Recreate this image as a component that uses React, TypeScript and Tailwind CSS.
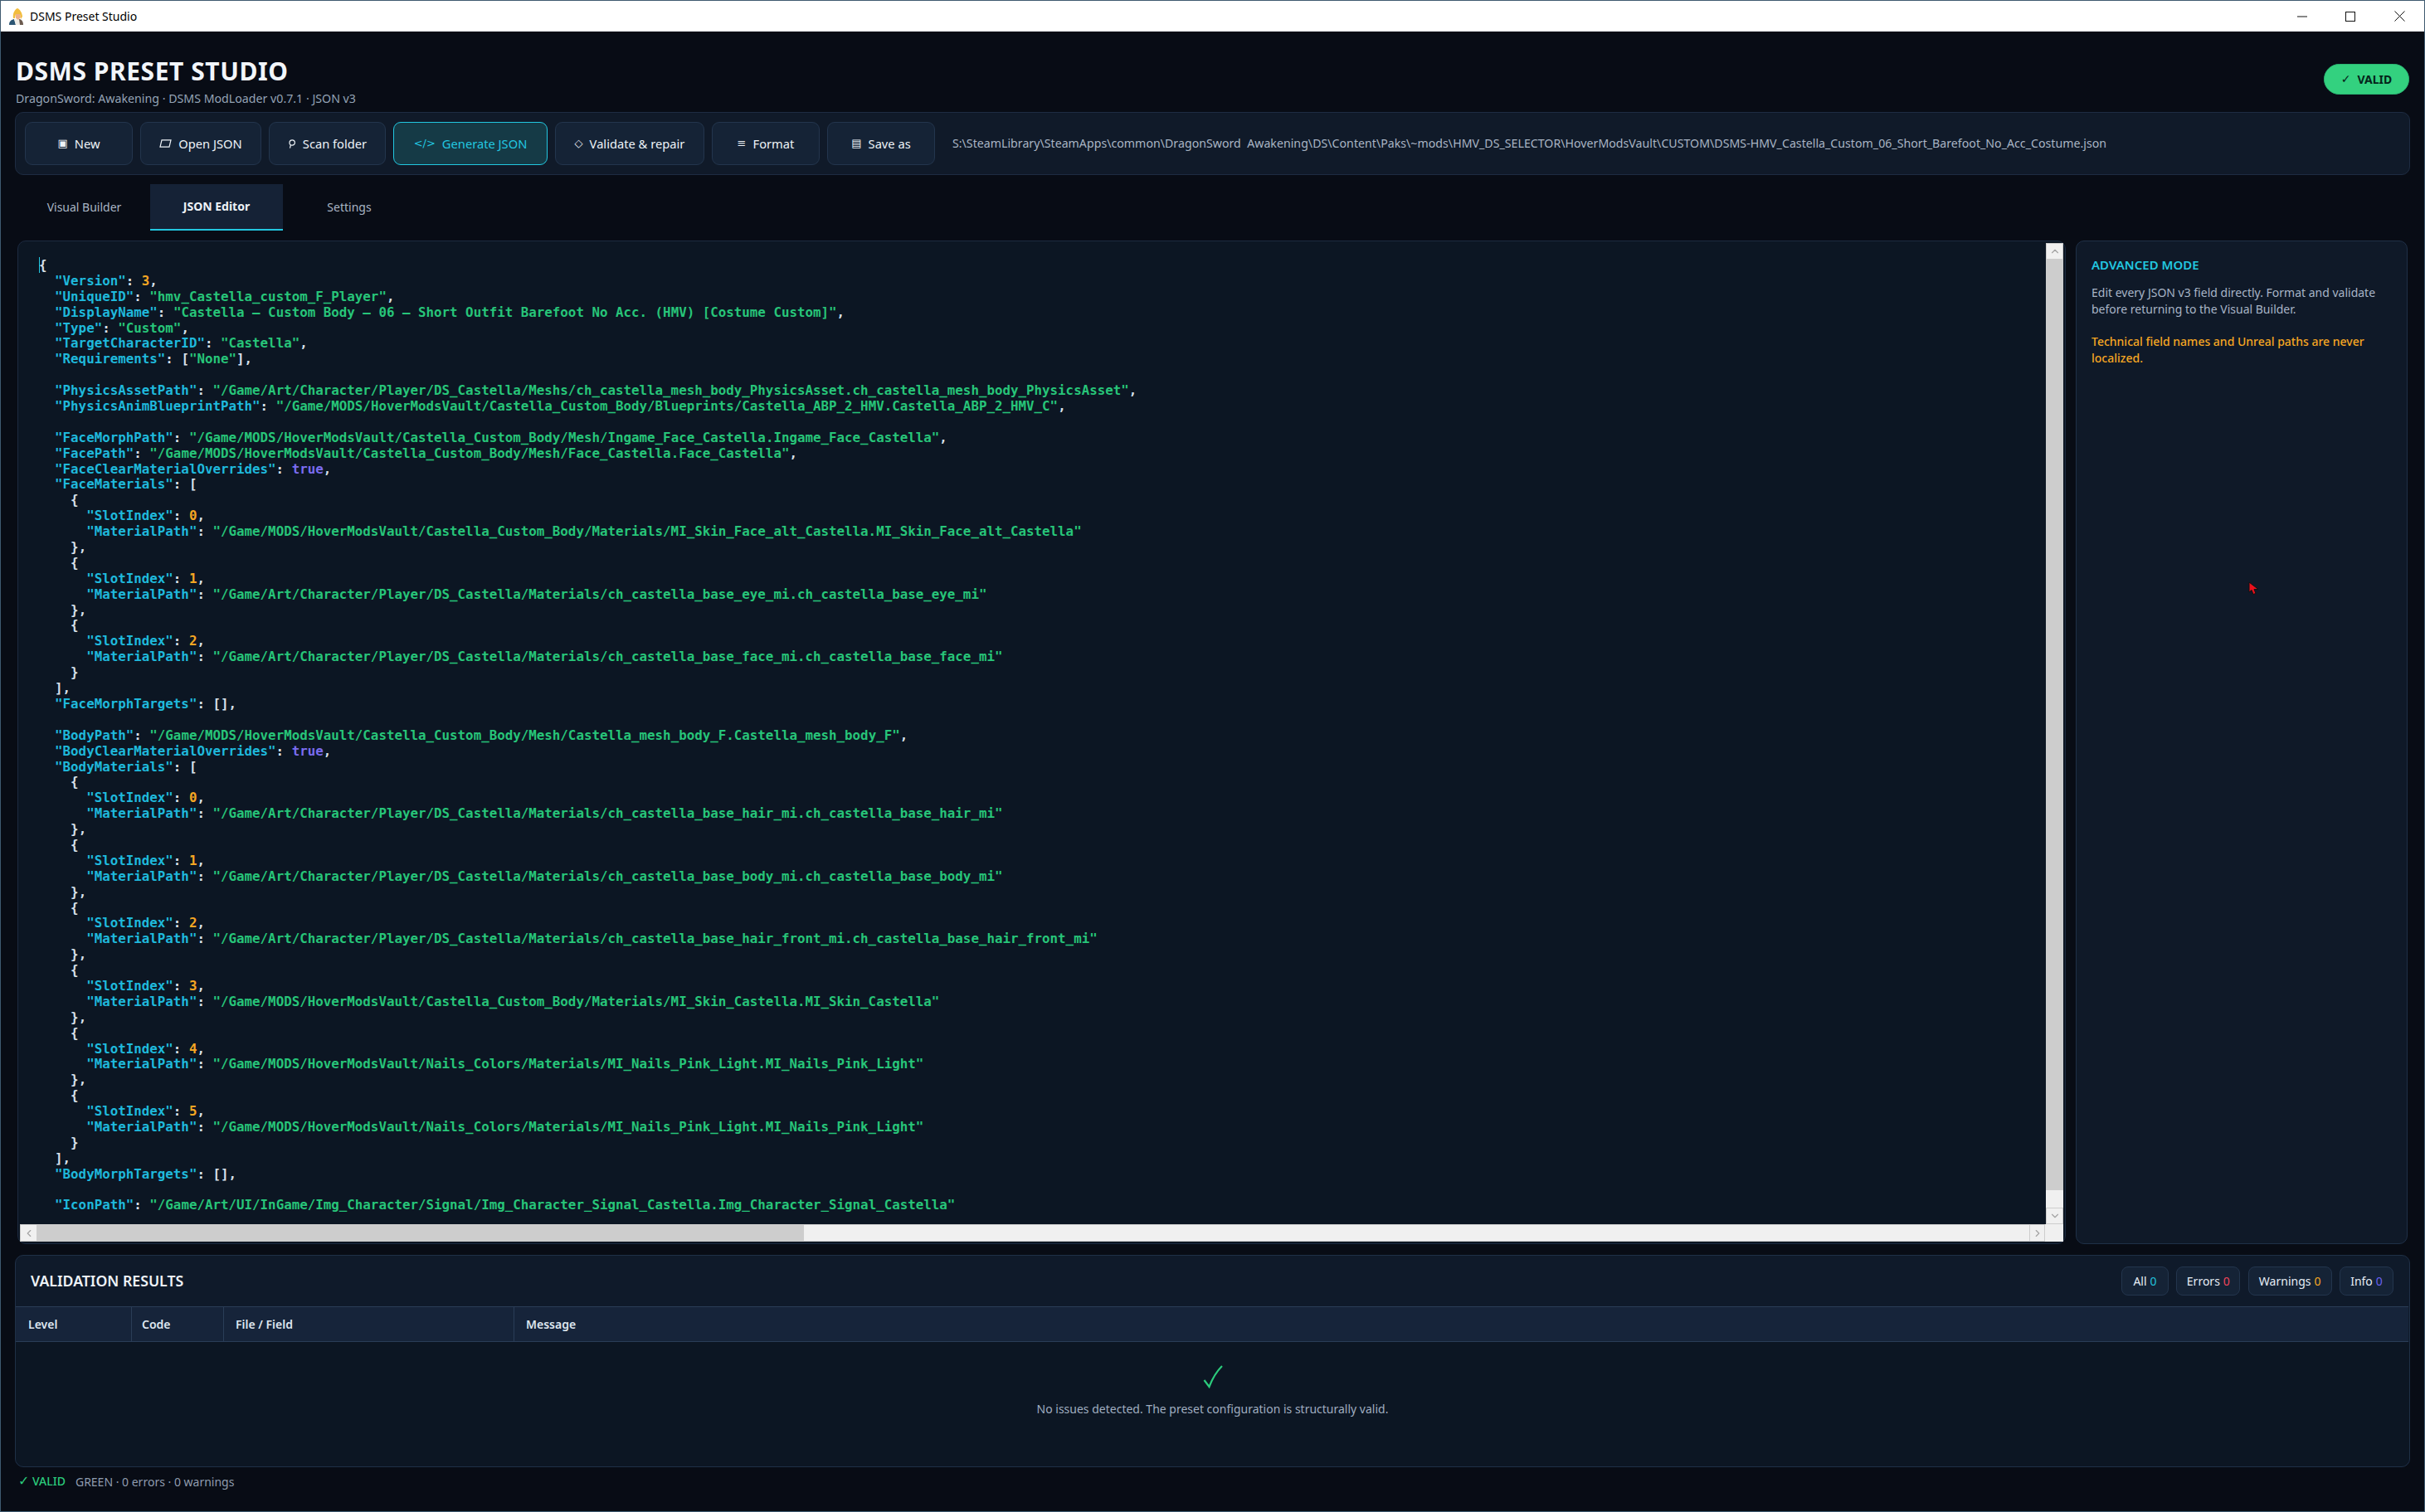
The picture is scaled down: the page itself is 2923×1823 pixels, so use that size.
import { ChevronDown, ChevronLeft, ChevronRight, ChevronUp } from 'lucide-react'

const jsonLines = [
  '{',
  '  "Version": 3,',
  '  "UniqueID": "hmv_Castella_custom_F_Player",',
  '  "DisplayName": "Castella – Custom Body – 06 – Short Outfit Barefoot No Acc. (HMV) [Costume Custom]",',
  '  "Type": "Custom",',
  '  "TargetCharacterID": "Castella",',
  '  "Requirements": ["None"],',
  '',
  '  "PhysicsAssetPath": "/Game/Art/Character/Player/DS_Castella/Meshs/ch_castella_mesh_body_PhysicsAsset.ch_castella_mesh_body_PhysicsAsset",',
  '  "PhysicsAnimBlueprintPath": "/Game/MODS/HoverModsVault/Castella_Custom_Body/Blueprints/Castella_ABP_2_HMV.Castella_ABP_2_HMV_C",',
  '',
  '  "FaceMorphPath": "/Game/MODS/HoverModsVault/Castella_Custom_Body/Mesh/Ingame_Face_Castella.Ingame_Face_Castella",',
  '  "FacePath": "/Game/MODS/HoverModsVault/Castella_Custom_Body/Mesh/Face_Castella.Face_Castella",',
  '  "FaceClearMaterialOverrides": true,',
  '  "FaceMaterials": [',
  '    {',
  '      "SlotIndex": 0,',
  '      "MaterialPath": "/Game/MODS/HoverModsVault/Castella_Custom_Body/Materials/MI_Skin_Face_alt_Castella.MI_Skin_Face_alt_Castella"',
  '    },',
  '    {',
  '      "SlotIndex": 1,',
  '      "MaterialPath": "/Game/Art/Character/Player/DS_Castella/Materials/ch_castella_base_eye_mi.ch_castella_base_eye_mi"',
  '    },',
  '    {',
  '      "SlotIndex": 2,',
  '      "MaterialPath": "/Game/Art/Character/Player/DS_Castella/Materials/ch_castella_base_face_mi.ch_castella_base_face_mi"',
  '    }',
  '  ],',
  '  "FaceMorphTargets": [],',
  '',
  '  "BodyPath": "/Game/MODS/HoverModsVault/Castella_Custom_Body/Mesh/Castella_mesh_body_F.Castella_mesh_body_F",',
  '  "BodyClearMaterialOverrides": true,',
  '  "BodyMaterials": [',
  '    {',
  '      "SlotIndex": 0,',
  '      "MaterialPath": "/Game/Art/Character/Player/DS_Castella/Materials/ch_castella_base_hair_mi.ch_castella_base_hair_mi"',
  '    },',
  '    {',
  '      "SlotIndex": 1,',
  '      "MaterialPath": "/Game/Art/Character/Player/DS_Castella/Materials/ch_castella_base_body_mi.ch_castella_base_body_mi"',
  '    },',
  '    {',
  '      "SlotIndex": 2,',
  '      "MaterialPath": "/Game/Art/Character/Player/DS_Castella/Materials/ch_castella_base_hair_front_mi.ch_castella_base_hair_front_mi"',
  '    },',
  '    {',
  '      "SlotIndex": 3,',
  '      "MaterialPath": "/Game/MODS/HoverModsVault/Castella_Custom_Body/Materials/MI_Skin_Castella.MI_Skin_Castella"',
  '    },',
  '    {',
  '      "SlotIndex": 4,',
  '      "MaterialPath": "/Game/MODS/HoverModsVault/Nails_Colors/Materials/MI_Nails_Pink_Light.MI_Nails_Pink_Light"',
  '    },',
  '    {',
  '      "SlotIndex": 5,',
  '      "MaterialPath": "/Game/MODS/HoverModsVault/Nails_Colors/Materials/MI_Nails_Pink_Light.MI_Nails_Pink_Light"',
  '    }',
  '  ],',
  '  "BodyMorphTargets": [],',
  '',
  '  "IconPath": "/Game/Art/UI/InGame/Img_Character/Signal/Img_Character_Signal_Castella.Img_Character_Signal_Castella"',
]

const openIcon = (
  <svg width="15" height="10" viewBox="0 0 15 10">
    <path d="M3 0.8h11l-2 8.4H1z" fill="none" stroke="currentColor" strokeWidth="1.2" />
  </svg>
)

const scanIcon = (
  <svg width="10" height="11" viewBox="0 0 10 11">
    <circle cx="5.2" cy="4" r="3.2" fill="none" stroke="currentColor" strokeWidth="1.2" />
    <path d="M3.4 7l-0.9 3.6" stroke="currentColor" strokeWidth="1.2" />
  </svg>
)

const tools = [
  { icon: '▣', label: 'New', w: 'w-[130px]' },
  { icon: openIcon, label: 'Open JSON', w: 'w-[146px]' },
  { icon: scanIcon, label: 'Scan folder', w: 'w-[141px]' },
  { icon: '</>', label: 'Generate JSON', w: 'w-[186px]', active: true },
  { icon: '◇', label: 'Validate & repair', w: 'w-[180px]' },
  { icon: '≡', label: 'Format', w: 'w-[130px]' },
  { icon: '▤', label: 'Save as', w: 'w-[130px]' },
]

const filters = [
  { label: 'All', color: 'text-[#22c1dc]', w: 'w-[57px]' },
  { label: 'Errors', color: 'text-[#f0455a]', w: 'w-[77px]' },
  { label: 'Warnings', color: 'text-[#f5a623]', w: 'w-[101px]' },
  { label: 'Info', color: 'text-[#6a62f0]', w: 'w-[65px]' },
]

function JsonLine({ text }: { text: string }) {
  const parts = text.match(/"[^"]*"(?=:)|"[^"]*"|\b\d+\b|\btrue\b|\s+|[^\s"]/g) ?? []
  return (
    <div className="h-[18.9px] whitespace-pre">
      {parts.map((part, i) => {
        let color = 'text-[#d8e0ea]'
        if (part.startsWith('"')) {
          color = text.slice(text.indexOf(part) + part.length).startsWith(':') ? 'text-[#1fb9dc]' : 'text-[#27c579]'
        } else if (/^\d+$/.test(part)) {
          color = 'text-[#f5a623]'
        } else if (part === 'true') {
          color = 'text-[#7a6cf0]'
        }
        return (
          <span key={i} className={color}>
            {part}
          </span>
        )
      })}
    </div>
  )
}

function ScrollButton({ children, className }: { children: React.ReactNode; className: string }) {
  return (
    <div className={`flex shrink-0 items-center justify-center border border-[#cdcdcd] bg-[#f0f0f0] text-[#a3a3a3] ${className}`}>
      {children}
    </div>
  )
}

function AppIcon() {
  return (
    <svg width="19" height="22" viewBox="0 0 19 22" className="shrink-0">
      <path d="M1 21c0-4 2-6 6-7l2 7z" fill="#2c5573" />
      <path d="M13 14c3 0 5 3 5 7h-5z" fill="#6b5a4e" />
      <path d="M7 14h6l1 7H9z" fill="#f1ede6" />
      <path d="M6 13c-1-6 2-11 5-12 3 1 6 6 6 10l-2 3-1-6H9l-1 5z" fill="#f2bd3e" />
      <path d="M9 8h5l1 4-3 3-3-2z" fill="#eeb088" />
    </svg>
  )
}

export default function App() {
  return (
    <div className="flex h-[1823px] w-[2923px] flex-col overflow-hidden border border-[#3f5a70] bg-[#080c15] font-['Noto_Sans',sans-serif] text-[#e6edf5]">
      {/* window title bar */}
      <div className="flex h-[37px] shrink-0 items-center bg-white text-black">
        <div className="ml-[9px] flex flex-1 items-center gap-[7px]">
          <AppIcon />
          <span className="text-[14px] leading-none">DSMS Preset Studio</span>
        </div>
        <div className="flex items-center text-[#111]">
          <div className="flex w-[59px] justify-center pr-[5px]">
            <svg width="12" height="12" viewBox="0 0 12 12">
              <path d="M0 6h12" stroke="currentColor" />
            </svg>
          </div>
          <div className="flex w-[59px] justify-center pr-[7px]">
            <svg width="12" height="12" viewBox="0 0 12 12">
              <rect x="0.5" y="0.5" width="11" height="11" fill="none" stroke="currentColor" />
            </svg>
          </div>
          <div className="flex w-[56px] justify-center pr-[3px]">
            <svg width="13" height="13" viewBox="0 0 13 13">
              <path d="M0.5 0.5l12 12M12.5 0.5l-12 12" stroke="currentColor" />
            </svg>
          </div>
        </div>
      </div>

      {/* header */}
      <div className="flex h-[97px] shrink-0 justify-between pl-[18px] pr-[18px]">
        <div className="pt-[28px]">
          <h1 className="text-[30px] font-bold leading-[40px] tracking-[0.55px] text-[#f2f6fb]">DSMS PRESET STUDIO</h1>
          <p className="mt-[3px] text-[14.2px] leading-[20px] text-[#94a3b5]">DragonSword: Awakening · DSMS ModLoader v0.7.1 · JSON v3</p>
        </div>
        <div className="mt-[39px] flex h-[37px] w-[103px] items-center justify-center gap-[8px] rounded-full border border-[#2bb874] bg-[#33d17f] text-[14px] font-bold text-[#04231a]">
          <span className="font-['DejaVu_Sans']">✓</span>
          <span>VALID</span>
        </div>
      </div>

      {/* toolbar */}
      <div className="mx-[17px] flex h-[76px] shrink-0 items-center gap-[9px] rounded-[10px] border border-[#1e2c42] bg-[#101a29] px-[11px]">
        {tools.map((tool) => (
          <button
            key={tool.label}
            className={`flex h-[52px] items-center justify-center gap-[8px] rounded-[9px] border text-[14.7px] ${tool.w} ${
              tool.active ? 'border-[#22c7e0] bg-[#153a46] text-[#22c7e0]' : 'border-[#23354d] bg-[#152336] text-[#eef3f8]'
            }`}
          >
            <span className="font-['DejaVu_Sans'] text-[13px]">{tool.icon}</span>
            <span>{tool.label}</span>
          </button>
        ))}
        <span className="ml-[12px] whitespace-pre text-[14.2px] text-[#a9b5c4]">
          {'S:\\SteamLibrary\\SteamApps\\common\\DragonSword  Awakening\\DS\\Content\\Paks\\~mods\\HMV_DS_SELECTOR\\HoverModsVault\\CUSTOM\\DSMS-HMV_Castella_Custom_06_Short_Barefoot_No_Acc_Costume.json'}
        </span>
      </div>

      {/* tabs */}
      <div className="mt-[11px] flex h-[56px] shrink-0 pl-[17px] text-[14px]">
        <div className="flex w-[163px] items-center justify-center pb-[2px] pl-[4px] text-[#a9b5c4]">Visual Builder</div>
        <div className="flex w-[160px] items-center justify-center border-b-2 border-[#22c7e0] bg-[#152236] pb-[1px] font-bold text-[#eef3f8]">JSON Editor</div>
        <div className="flex w-[160px] items-center justify-center pb-[2px] text-[#a9b5c4]">Settings</div>
      </div>

      {/* editor + side panel */}
      <div className="mt-[12px] flex h-[1210px] shrink-0 gap-[12px] pl-[20px]">
        <div className="flex w-[2469px] flex-col rounded-[10px] border border-[#1c2a40] bg-[#0c1623] p-[2px]">
          <div className="flex min-h-0 flex-1">
            <div className="relative min-w-0 flex-1 pb-[15px] pl-[23px] pt-[18px]">
              <div className="absolute left-[23px] top-[17px] h-[19px] w-px bg-[#22c7e0]" />
              <div className="h-full overflow-hidden font-['DejaVu_Sans_Mono',monospace] text-[15.82px] font-bold leading-[18.9px]">
                {jsonLines.map((line, i) => (
                  <JsonLine key={i} text={line} />
                ))}
              </div>
            </div>
            <div className="flex w-[21px] shrink-0 flex-col bg-[#f0f0f0]">
              <ScrollButton className="h-[20px]">
                <ChevronUp size={14} strokeWidth={2} />
              </ScrollButton>
              <div className="h-[1122px] shrink-0 bg-[#cdcdcd]" />
              <div className="flex-1" />
              <ScrollButton className="h-[20px]">
                <ChevronDown size={14} strokeWidth={2} />
              </ScrollButton>
            </div>
          </div>
          <div className="flex h-[21px] shrink-0 bg-[#f0f0f0]">
            <ScrollButton className="w-[21px]">
              <ChevronLeft size={14} strokeWidth={2} />
            </ScrollButton>
            <div className="w-[924px] shrink-0 bg-[#cdcdcd]" />
            <div className="flex-1 border-y border-[#cdcdcd]" />
            <ScrollButton className="w-[19px]">
              <ChevronRight size={14} strokeWidth={2} />
            </ScrollButton>
            <div className="w-[22px] shrink-0" />
          </div>
        </div>
        <div className="relative w-[400px] rounded-[10px] border border-[#1f3047] bg-[#0f1928] px-[18px] pt-[18px] text-[14px]">
          <h2 className="text-[15px] font-semibold leading-[20px] text-[#22c7e0]">ADVANCED MODE</h2>
          <p className="mt-[14px] leading-[20px] text-[#a8b5c7]">Edit every JSON v3 field directly. Format and validate before returning to the Visual Builder.</p>
          <p className="mt-[19px] font-medium leading-[19.5px] text-[#f5a623]">Technical field names and Unreal paths are never localized.</p>
          <svg width="13" height="17" viewBox="0 0 13 17" className="absolute left-[207px] top-[410px]">
            <path d="M1 1v12l3-2.5 2 5 3-1-2-5h5z" fill="#e8101c" stroke="#111" />
          </svg>
        </div>
      </div>

      {/* validation results */}
      <div className="mx-[17px] mt-[13px] flex h-[256px] shrink-0 flex-col rounded-[10px] border border-[#1f3047] bg-[#0f1a2a]">
        <div className="flex h-[61px] shrink-0 items-start justify-between pl-[18px] pr-[19px] pt-[13px]">
          <h2 className="text-[17.7px] font-semibold leading-[35px] text-[#eef3f8]">VALIDATION RESULTS</h2>
          <div className="flex gap-[9.33px]">
            {filters.map((filter) => (
              <div key={filter.label} className={`flex h-[35px] items-center justify-center gap-[4px] rounded-[8px] border border-[#23354d] bg-[#152336] text-[14px] ${filter.w}`}>
                <span>{filter.label}</span>
                <span className={filter.color}>0</span>
              </div>
            ))}
          </div>
        </div>
        <div className="mr-[1px] flex h-[43px] shrink-0 items-stretch border-y border-[#2a3d57] bg-[#16243a] text-[14px] font-semibold text-[#dfe7f0]">
          <div className="flex w-[140px] items-center border-r border-[#2a3d57] pl-[15px]">Level</div>
          <div className="flex w-[111px] items-center border-r border-[#2a3d57] pl-[12px]">Code</div>
          <div className="flex w-[350px] items-center border-r border-[#2a3d57] pl-[14px]">File / Field</div>
          <div className="flex flex-1 items-center pl-[14px]">Message</div>
        </div>
        <div className="flex flex-1 flex-col items-center rounded-b-[10px] bg-[#0c1623] pt-[28px]">
          <svg width="24" height="28" viewBox="0 0 24 28">
            <path d="M1.5 18l6 8C11 17 16 8 23 1" fill="none" stroke="#2bcb7c" strokeWidth="2.2" />
          </svg>
          <p className="mt-[15px] text-[14px] leading-[20px] text-[#a0aec0]">No issues detected. The preset configuration is structurally valid.</p>
        </div>
      </div>

      {/* status bar */}
      <div className="flex flex-1 items-center gap-[12px] pb-[19px] pl-[21px] text-[14px]">
        <span className="font-medium text-[#2bcb7c]">
          <span className="font-['DejaVu_Sans'] text-[16px]">✓</span> VALID
        </span>
        <span className="text-[#8f9cae]">GREEN · 0 errors · 0 warnings</span>
      </div>
    </div>
  )
}
